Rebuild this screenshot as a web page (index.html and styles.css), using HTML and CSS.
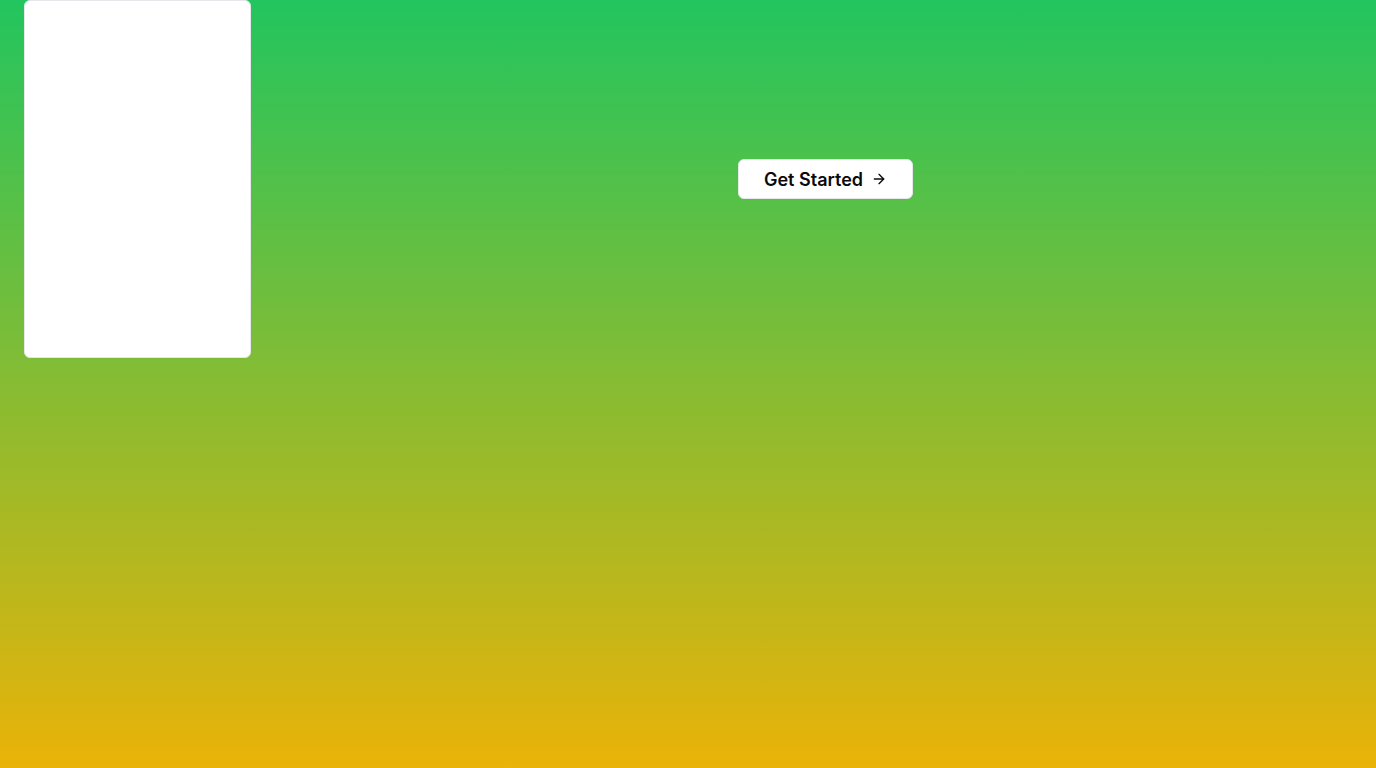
FILE: index.html
```html
<!DOCTYPE html>
<html lang="en">
<head>
<meta charset="utf-8">
<title>Get Started</title>
<link rel="stylesheet" href="styles.css">
</head>
<body>
<div class="page">
  <aside class="panel"></aside>
  <main class="main">
    <button class="cta" type="button">
      <span>Get Started</span>
      <svg class="cta-icon" viewBox="0 0 24 24" width="16" height="16" fill="none" stroke="currentColor" stroke-width="2" stroke-linecap="round" stroke-linejoin="round"><path d="M5 12h14"/><path d="m12 5 7 7-7 7"/></svg>
    </button>
  </main>
</div>
</body>
</html>
```

FILE: styles.css
```css
* { box-sizing: border-box; }
html, body { margin: 0; padding: 0; }
body {
  min-height: 100vh;
  background: linear-gradient(to bottom, #22c55e, #eab308);
  font-family: Inter, "Liberation Sans", sans-serif;
}
.page {
  display: flex;
  gap: 24px;
  padding-left: 24px;
  min-height: 100vh;
  align-items: flex-start;
}
.panel {
  width: 227px;
  height: 358px;
  flex-shrink: 0;
  background: #ffffff;
  border: 1px solid #e5e7eb;
  border-radius: 6px;
}
.main {
  flex: 1;
  display: flex;
  justify-content: center;
  padding-top: 159px;
}
.cta {
  display: inline-flex;
  align-items: center;
  gap: 8px;
  height: 40px;
  padding: 0 25px;
  background: #ffffff;
  border: 1px solid #e5e7eb;
  border-radius: 6px;
  color: #0a0a0a;
  font-family: Inter, "Liberation Sans", sans-serif;
  font-size: 18px;
  font-weight: 600;
  cursor: pointer;
}
.cta-icon { display: block; }
```
